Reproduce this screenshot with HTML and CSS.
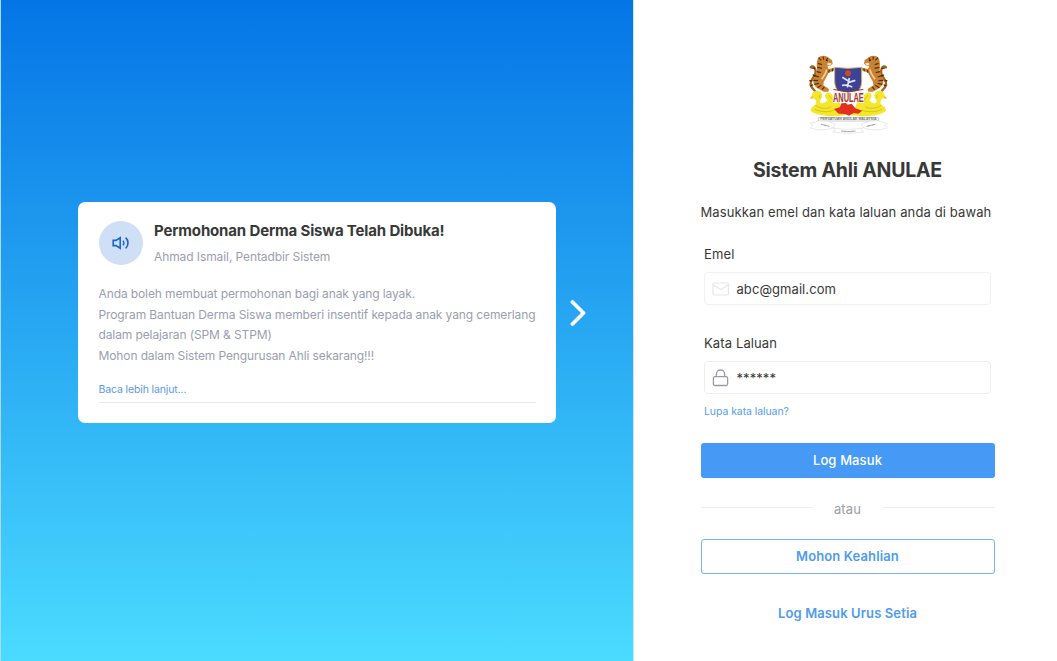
FILE: index.html
```html
<!DOCTYPE html>
<html lang="ms">
<head>
<meta charset="utf-8">
<title>Sistem Ahli ANULAE</title>
<link rel="stylesheet" href="styles.css">
</head>
<body>
<main class="page">
  <section class="hero">
    <article class="card">
      <header class="card-head">
        <span class="avatar">
          <svg width="18" height="14" viewBox="0 0 18 14" fill="none" stroke="#1b66c9" stroke-width="1.6">
            <path d="M1.2 4.4h2.8L8.2 1.8v10.4L4 9.6H1.2z"/>
            <path d="M10.9 4.6c1.3 1.5 1.3 3.3 0 4.8" stroke-width="1.4"/>
            <path d="M13.6 1.7c3.2 2.8 3.2 7.8 0 10.6"/>
          </svg>
        </span>
        <div>
          <h2 class="card-title">Permohonan Derma Siswa Telah Dibuka!</h2>
          <p class="card-author">Ahmad Ismail, Pentadbir Sistem</p>
        </div>
      </header>
      <p class="card-body">Anda boleh membuat permohonan bagi anak yang layak.<br>Program Bantuan Derma Siswa memberi insentif kepada anak yang cemerlang<br>dalam pelajaran (SPM &amp; STPM)<br>Mohon dalam Sistem Pengurusan Ahli sekarang!!!</p>
      <a class="card-more">Baca lebih lanjut...</a>
    </article>
    <svg class="next" width="18" height="28" viewBox="0 0 18 28" fill="none" stroke="#fff" stroke-width="3.8" stroke-linecap="round" stroke-linejoin="round"><path d="M2.5 3l11 11-11 11"/></svg>
  </section>

  <section class="login">
    <svg class="logo" width="100" height="92" viewBox="0 0 300 276">
      <!-- left tiger and swan, mirrored for the right side -->
      <defs>
        <g id="tiger">
          <path d="M50 128c-14-12-15-26-5-38 8-10 10-18 6-28-3-8-9-9-13-4" fill="none" stroke="#a8641f" stroke-width="7" stroke-linecap="round"/>
          <path d="M60 30c6-7 20-9 29-3l13 10 2 10-8 7-8 1 4 8 17-4 3 7-20 8-7 14-8 14-1 10 17 11-2 8h-14l-18-10c-12-8-16-20-11-31l9-18c0-15-3-29 3-42z" fill="#c98232"/>
          <path d="M86 64c-2 12-8 20-15 30" fill="none" stroke="#f0cf98" stroke-width="5"/>
          <path d="M62 29l8 8M76 26l1 9M89 30l-4 7M60 46l12 4M58 58l14 3M56 71l13 3M50 83l13 4M46 97l14 1M49 109l14-3M58 119l12-7M72 125l7-8M94 66l-2 8M104 62l-1 8" stroke="#55300f" stroke-width="3.5"/>
          <path d="M40 60l11 1M44 80l8 5M34 98l9 1M37 114l8-4" stroke="#3e240f" stroke-width="3.5"/>
          <path d="M89 44l12 2-5 7-8-2z" fill="#f7e6c4"/>
          <path d="M84 36l5 3" stroke="#2b1a0c" stroke-width="4"/>
        </g>
        <g id="swan">
          <path d="M43 146c-4-12 10-21 21-16 10 4 11 16 4 25-5 7-1 11 6 11 6-1 11-5 14-9l-6-9c-5-10 7-18 16-12l24 22 20 44-30 3c-24 0-48-3-66-11-9-4-11-12-3-17l9-7c4-5 4-10 0-15z" fill="#f4e62c"/>
          <path d="M42 143l-7 9 12-1z" fill="#e5bf18"/>
          <path d="M52 172c14 10 32 12 48 5M50 184c20 9 42 9 60 2M93 142c4 8 10 14 18 18M66 141l-2 9" fill="none" stroke="#d5c41c" stroke-width="3"/>
        </g>
      </defs>
      <use href="#tiger"/>
      <use href="#tiger" transform="translate(302 0) scale(-1 1)"/>
      <use href="#swan"/>
      <use href="#swan" transform="translate(302 0) scale(-1 1)"/>
      <path d="M110 58q41 6 81 0v43c-1 24-17 40-40 52-24-12-40-28-41-52z" fill="#3d4295" stroke="#d4b06c" stroke-width="3"/>
      <circle cx="150" cy="76" r="9" fill="#c64b28"/>
      <path d="M154 90l-6 28M150 104l22-7M150 98l-17-10M132 112l15-1 16 6" fill="none" stroke="#dfe5f8" stroke-width="5"/>
      <path d="M104 126l46 7 48-7v40q-46-8-94 0z" fill="#fff4ea"/>
      <path d="M106 124l44 8 46-8" fill="none" stroke="#963b3a" stroke-width="3"/>
      <text x="151" y="163" class="logo-name" text-anchor="middle" textLength="92" lengthAdjust="spacingAndGlyphs">ANULAE</text>
      <path d="M108 183l18-5 4-12 14-1 5 5 12-3 11 14 21 7-12 9-14-2-14 8-13-5-18-1z" fill="#e3301f"/>
      <path d="M61 209h181v10H61z" fill="#fff" stroke="#999" stroke-width="1.5"/>
      <text x="151" y="217" class="logo-motto" text-anchor="middle" textLength="169" lengthAdjust="spacingAndGlyphs">PERSATUAN ANULAE MALAYSIA</text>
      <path d="M61 220l-25 6 9 5-8 9q34 11 66 1l10-12-21-8M242 220l26 6-9 5 9 9q-36 11-68 1l-10-12 21-8M104 239l10 5-9 8q44 9 92 0l-10-8 10-5q-46 10-93 0z" fill="#fff" stroke="#d2d2d2" stroke-width="1.5"/>
      <path d="M70 229l24 6M206 235l26-6M130 249q20 3 42 0" stroke="#777" stroke-width="3" fill="none" stroke-dasharray="3 1"/>
    </svg>
    <h1 class="title">Sistem Ahli ANULAE</h1>
    <p class="lead">Masukkan emel dan kata laluan anda di bawah</p>

    <div class="field">
      <label class="label">Emel</label>
      <div class="input input-email">
        <svg width="18" height="14" viewBox="0 0 18 14" fill="none" stroke="#e6e7e9" stroke-width="1.2" stroke-linejoin="round"><rect x="1" y="1" width="15.5" height="12" rx="1.5"/><path d="M1.5 3l7.2 4.5L16 3"/></svg>
        <span>abc@gmail.com</span>
      </div>
    </div>
    <div class="field field-pass">
      <label class="label">Kata Laluan</label>
      <div class="input">
        <svg width="18" height="18" viewBox="0 0 18 18" fill="none" stroke="#999bad" stroke-width="1.3"><rect x="1.4" y="7.7" width="14.2" height="8.8" rx="1.5"/><path d="M4.4 7.7V5.1a4.1 4.1 0 0 1 8.2 0v2.6"/></svg>
        <span>******</span>
      </div>
      <a class="forgot">Lupa kata laluan?</a>
    </div>
    <button class="btn btn-primary">Log Masuk</button>
    <div class="divider"><span>atau</span></div>
    <button class="btn btn-outline">Mohon Keahlian</button>
    <a class="admin">Log Masuk Urus Setia</a>
  </section>
</main>
</body>
</html>
```
FILE: styles.css
```css
* { box-sizing: border-box; }
body, h1, h2, p { margin: 0; }
body { font-family: Inter, "Liberation Sans", sans-serif; color: #383838; background: #fff; }
.page { display: flex; height: 661px; overflow: hidden; }

.hero {
  width: 634px;
  flex: none;
  display: flex;
  align-items: flex-start;
  padding: 202.4px 0 0 77px;
  border-left: 1px solid #a9dcfb;
  border-right: 1px solid #c5eafd;
  background: linear-gradient(#0575e6, #4bdbff);
}
.card { width: 478.4px; height: 220.4px; padding: 18.5px 20.5px; border-radius: 7px; background: #fff; }
.card-head { display: flex; gap: 11.5px; }
.avatar { width: 44px; height: 44px; border-radius: 50%; background: #cfdff5; display: flex; align-items: center; justify-content: center; }
.card-title { font-size: 15px; line-height: 20px; font-weight: 700; letter-spacing: -0.15px; }
.card-author { margin-top: 6px; font-size: 12px; line-height: 20px; letter-spacing: -0.09px; color: #9a9eb1; }
.card-body { margin-top: 17.3px; font-size: 12px; line-height: 20.6px; letter-spacing: -0.11px; color: #9a9eb1; white-space: nowrap; }
.card-more { display: block; margin-top: 14.7px; height: 22px; font-size: 10.5px; line-height: 18px; letter-spacing: -0.13px; color: #5b9ae2; border-bottom: 1px solid #ececf0; }
.next { margin: 96.5px 0 0 13.6px; }

.login { width: 294px; margin-left: 66.5px; display: flex; flex-direction: column; }
.logo { margin: 48px 0 0 97.5px; flex: none; }
.logo-name { font: 700 37px "Liberation Sans", sans-serif; fill: #963b3a; }
.logo-motto { font: 700 8px "Liberation Sans", sans-serif; fill: #777; }
.title { margin-top: 17px; text-align: center; font-size: 19.5px; line-height: 26px; font-weight: 700; letter-spacing: -0.22px; }
.lead { margin-top: 19px; font-size: 13px; line-height: 20px; letter-spacing: 0.12px; white-space: nowrap; }
.field { margin: 22px 4px 0 3.5px; }
.label { display: block; font-size: 13px; line-height: 20px; letter-spacing: 0.12px; }
.input { display: flex; align-items: center; gap: 7px; height: 33px; margin-top: 8px; padding-left: 6.5px; border: 1px solid #ededf1; border-radius: 4px; font-size: 13px; letter-spacing: 0.07px; }
.input-email { border-color: #f1f1f2; }
.field-pass { margin-top: 28px; }
.forgot { display: block; margin-top: 9px; font-size: 10.5px; line-height: 18px; letter-spacing: -0.08px; color: #57a0ee; }
.btn { height: 35px; flex: none; padding: 0 0 1px; border-radius: 3px; font: 500 13px Inter, sans-serif; letter-spacing: 0.12px; }
.btn-primary { margin-top: 22px; border: 0; color: #fff; background: #4699f5; }
.btn-outline { margin-top: 20px; padding-bottom: 2px; border: 1px solid #78b3ef; color: #509bec; background: #fff; font-weight: 600; }
.divider { display: flex; align-items: center; gap: 21px; margin-top: 21px; font-size: 13px; line-height: 20px; letter-spacing: 0.12px; color: #999eaa; }
.divider::before, .divider::after { content: ""; flex: 1; height: 1px; margin-bottom: 3px; background: #edf0f3; }
.admin { margin-top: 29px; text-align: center; font-size: 13px; line-height: 20px; font-weight: 600; letter-spacing: 0.12px; color: #509bec; }
```
